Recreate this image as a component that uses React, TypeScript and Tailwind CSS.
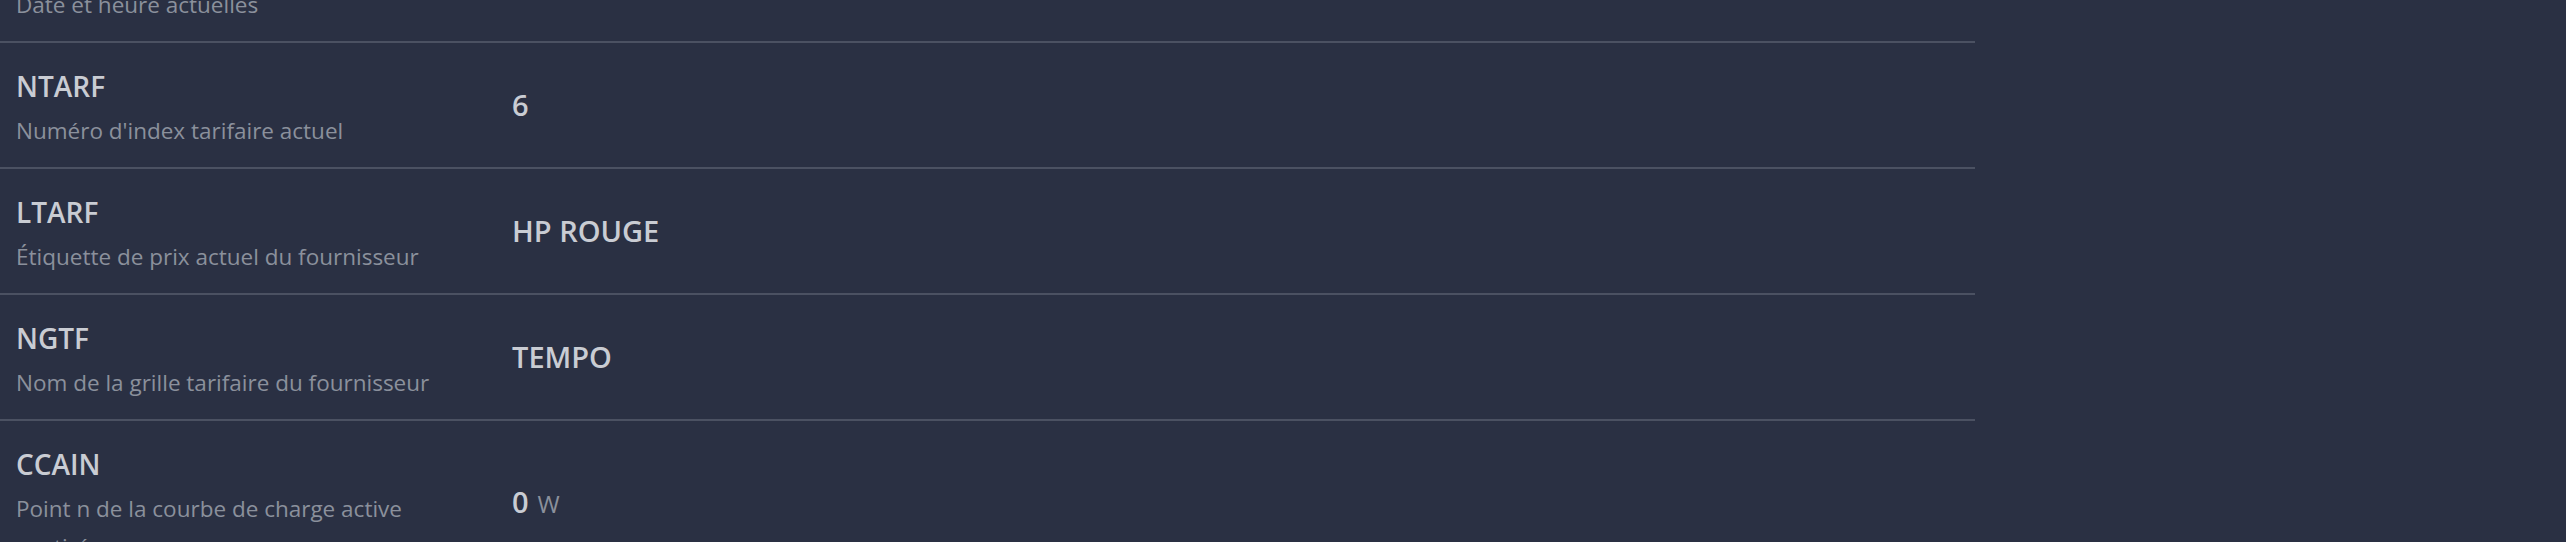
type Row = {
  name: string;
  label: string;
  value: string;
  unit?: string;
};

const rows: Row[] = [
  { name: "DATE", label: "Date et heure actuelles", value: "H 24/05/12 14:32:08" },
  { name: "NTARF", label: "Numéro d'index tarifaire actuel", value: "6" },
  { name: "LTARF", label: "Étiquette de prix actuel du fournisseur", value: "HP ROUGE" },
  { name: "NGTF", label: "Nom de la grille tarifaire du fournisseur", value: "TEMPO" },
  { name: "CCAIN", label: "Point n de la courbe de charge active soutirée", value: "0", unit: "W" },
];

const DataRow = ({ row }: { row: Row }) => {
  return (
    <div className="flex items-center border-b-2 border-[#4b5162]">
      <div className="w-[496px] shrink-0 pl-4 pr-4 pt-[22px] pb-[17px]">
        <p className="text-[28px] leading-[42px] font-semibold text-[#c9ccd3]">{row.name}</p>
        <p className="mt-[5px] text-[22.5px] leading-[38px] text-[#8b909c]">{row.label}</p>
      </div>
      <div className="pl-4 flex items-baseline gap-[9px]">
        <span className="text-[29px] font-semibold text-[#c9ccd3]">{row.value}</span>
        {row.unit && <span className="text-[24px] text-[#8b909c]">{row.unit}</span>}
      </div>
    </div>
  );
};

export default function App() {
  return (
    <div
      className="w-[2566px] h-[542px] overflow-hidden bg-[#2a3043]"
      style={{ fontFamily: '"Segoe UI", "Open Sans", "Noto Sans", sans-serif' }}
    >
      <div className="w-[1975px] -mt-[83px]">
        {rows.map((row) => (
          <DataRow key={row.name} row={row} />
        ))}
      </div>
    </div>
  );
}
